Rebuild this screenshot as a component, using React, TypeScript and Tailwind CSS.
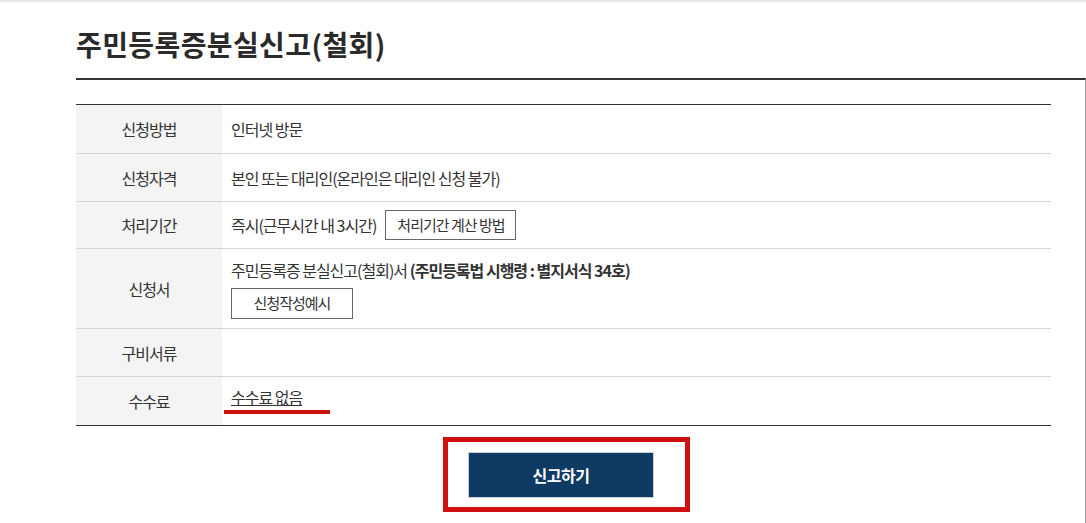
import React from "react";

const font = { fontFamily: '"Noto Sans CJK KR", "Noto Sans", sans-serif' };

function Row({
  label,
  h,
  children,
  last,
}: {
  label: string;
  h: string;
  children?: React.ReactNode;
  last?: boolean;
}) {
  return (
    <div className={`flex ${h} ${last ? "" : "border-b border-[#d6d6d6]"}`}>
      <div className="w-[146px] shrink-0 bg-[#f4f4f4] flex items-center justify-center text-[16px] tracking-[-1px] text-[#333]">
        {label}
      </div>
      <div className="flex-1 pl-[9px] flex items-center text-[16px] tracking-[-1px] text-[#333]">
        {children}
      </div>
    </div>
  );
}

export default function App() {
  return (
    <div className="w-[1086px] h-[523px] bg-white overflow-hidden flex flex-col" style={font}>
      <div className="h-[2px] bg-[#e8e8e8]" />
      <div className="pl-[76px] pt-[24px] pb-[16px]">
        <h1 className="text-[28px] leading-[36px] font-bold tracking-[0.4px] text-[#2a2a2a]">
          주민등록증분실신고(철회)
        </h1>
      </div>
      <div className="ml-[76px] flex-1 border-t-2 border-[#333] border-r border-r-[#9a9a9a] pr-[34px]">
        <div className="mt-[24px] border-t border-[#333] border-b border-b-[#333]">
          <Row label="신청방법" h="h-[49px]">인터넷 방문</Row>
          <Row label="신청자격" h="h-[48px]">본인 또는 대리인(온라인은 대리인 신청 불가)</Row>
          <Row label="처리기간" h="h-[47px]">
            <span>즉시(근무시간 내 3시간)</span>
            <span className="ml-[9px] h-[30px] px-[11px] border border-[#666] flex items-center text-[15px] tracking-[-1px] text-[#333]">
              처리기간 계산 방법
            </span>
          </Row>
          <Row label="신청서" h="h-[80px]">
            <div className="flex flex-col items-start">
              <div className="leading-[22px]">
                주민등록증 분실신고(철회)서{" "}
                <b className="font-bold">(주민등록법 시행령 : 별지서식 34호)</b>
              </div>
              <div className="mt-[7px] w-[122px] h-[31px] border border-[#666] flex items-center justify-center text-[15px] tracking-[-1px] text-[#333]">
                신청작성예시
              </div>
            </div>
          </Row>
          <Row label="구비서류" h="h-[48px]" />
          <Row label="수수료" h="h-[48px]" last>
            <span className="relative inline-block mb-[8px] leading-[22px] underline decoration-[#333] underline-offset-[1px]">
              수수료 없음
              <span className="absolute left-[-7px] top-[24px] w-[106px] h-[4px] bg-[#cc1111]" />
            </span>
          </Row>
        </div>
        <div className="flex justify-center mt-[26px] pr-[5px]">
          <div className="relative">
            <div className="w-[186px] h-[46px] bg-[#0f3a63] border border-[#c9d0d8] flex items-center justify-center text-white text-[16px] font-bold tracking-[-0.5px]">
              신고하기
            </div>
            <div className="absolute left-[-25px] top-[-15px] w-[247px] h-[75px] border-[5px] border-[#cf1010]" />
          </div>
        </div>
      </div>
    </div>
  );
}
